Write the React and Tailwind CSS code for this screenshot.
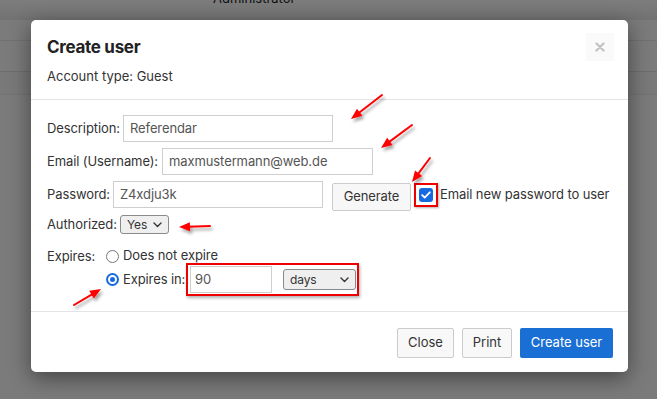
import React from "react";

const Chevron = ({ className = "" }) => (
  <svg className={className} width="9" height="6" viewBox="0 0 9 6" fill="none">
    <path d="M1 1l3.5 3.5L8 1" stroke="#333" strokeWidth="1.4" strokeLinecap="round" strokeLinejoin="round" />
  </svg>
);

const arrows = [
  [382, 95, 351, 119],
  [412, 125, 381, 148],
  [430, 158, 412, 182],
  [210, 226, 179, 227],
  [74, 305, 101, 289],
];

function Arrow({ x1, y1, x2, y2 }) {
  const dx = x2 - x1, dy = y2 - y1;
  const len = Math.hypot(dx, dy);
  const ux = dx / len, uy = dy / len;
  const hl = 11, hw = 4.5;
  const bx = x2 - ux * hl, by = y2 - uy * hl;
  const px = -uy, py = ux;
  const pts = `${x2},${y2} ${bx + px * hw},${by + py * hw} ${bx - px * hw},${by - py * hw}`;
  return (
    <g>
      <line x1={x1} y1={y1} x2={bx + ux * 2} y2={by + uy * 2} stroke="#f00" strokeWidth="2" strokeLinecap="round" />
      <polygon points={pts} fill="#f00" />
    </g>
  );
}

export default function App() {
  return (
    <div
      className="relative w-[657px] h-[399px] overflow-hidden bg-[#7b7b7b]"
      style={{ fontFamily: "Inter, 'Noto Sans', sans-serif" }}
    >
      {/* background page */}
      <div className="absolute left-0 top-0 w-full h-[20px] bg-gradient-to-b from-[#7d7d7d] to-[#727272]" />
      <div className="absolute left-[213px] top-[-11px] text-[13px] text-[#111]">Administrator</div>
      <div className="absolute left-0 top-[40px] w-full h-px bg-[#717171]" />
      <div className="absolute left-0 top-[71px] w-full h-px bg-[#6e6e6e]" />
      <div className="absolute left-0 top-[72px] w-full h-[22px] bg-[#797979]" />
      <div className="absolute left-0 top-[94px] w-full h-px bg-[#737373]" />

      {/* modal */}
      <div className="absolute left-[31px] top-[20px] w-[597px] h-[352px] bg-white rounded-[5px] shadow-[0_6px_22px_rgba(0,0,0,0.45)] flex flex-col text-[#333]">
        {/* header */}
        <div className="relative h-[80px] border-b border-[#e3e3e3] px-[16px] pt-[15px]">
          <div className="text-[17px] leading-[24px] font-bold text-[#222] tracking-[-0.3px]">Create user</div>
          <div className="mt-[7px] text-[13px] leading-[20px]">Account type: Guest</div>
          <div className="absolute right-[14px] top-[13px] w-[28px] h-[28px] bg-[#fafafa] flex items-center justify-center">
            <svg width="10" height="10" viewBox="0 0 10 10">
              <path d="M1.5 1.5l7 7M8.5 1.5l-7 7" stroke="#c4c4c4" strokeWidth="2.4" strokeLinecap="round" />
            </svg>
          </div>
        </div>

        {/* body */}
        <div className="h-[212px] border-b border-[#e3e3e3] pl-[16px] pt-[15px] text-[13px] tracking-[-0.1px]">
          <div className="flex items-center h-[27px]">
            <span className="w-[76px] whitespace-nowrap">Description:</span>
            <div className="w-[210px] h-[27px] border border-[#cfcfcf] flex items-center px-[6px] text-[#555]">Referendar</div>
          </div>
          <div className="flex items-center h-[27px] mt-[6px]">
            <span className="w-[115px] whitespace-nowrap">Email (Username):</span>
            <div className="w-[211px] h-[27px] border border-[#cfcfcf] flex items-center px-[6px] text-[#555]">maxmustermann@web.de</div>
          </div>
          <div className="flex items-start h-[29px] mt-[6px]">
            <span className="w-[66px] whitespace-nowrap leading-[27px]">Password:</span>
            <div className="w-[210px] h-[27px] border border-[#cfcfcf] flex items-center px-[6px] text-[#555]">Z4xdju3k</div>
            <div className="ml-[9px] w-[79px] h-[28px] border border-[#cbcbcb] bg-[#f7f7f7] rounded-[2px] flex items-center justify-center text-[#333] mt-[2px]">Generate</div>
            <div className="ml-[3px] mt-[2px] w-[24px] h-[24px] border-2 border-[#ee0000] flex items-center justify-center shadow-[1px_1px_2px_rgba(0,0,0,0.3)]">
              <div className="w-[14px] h-[14px] rounded-[3px] bg-[#1769e0] flex items-center justify-center">
                <svg width="10" height="8" viewBox="0 0 10 8">
                  <path d="M1.2 4.2l2.5 2.4L8.8 1.3" stroke="#fff" strokeWidth="1.8" fill="none" strokeLinecap="round" strokeLinejoin="round" />
                </svg>
              </div>
            </div>
            <span className="ml-[2px] whitespace-nowrap leading-[27px]">Email new password to user</span>
          </div>

          <div className="flex items-center h-[19px] mt-[5px]">
            <span className="w-[73px] whitespace-nowrap">Authorized:</span>
            <div className="w-[49px] h-[19px] border border-[#8a8a8a] rounded-[3px] bg-[#efefef] flex items-center justify-between pl-[6px] pr-[6px] text-[12px]">
              <span>Yes</span>
              <Chevron />
            </div>
          </div>

          <div className="flex mt-[14px]">
            <span className="w-[59px] h-[16px] leading-[16px]">Expires:</span>
            <div className="flex flex-col">
              <div className="flex items-center h-[16px]">
                <div className="w-[13px] h-[13px] rounded-full border-[1.5px] border-[#777] bg-white" />
                <span className="ml-[4px]">Does not expire</span>
              </div>
              <div className="flex items-center mt-[-1px]">
                <div className="w-[13px] h-[13px] rounded-full bg-[#1769e0] flex items-center justify-center">
                  <div className="w-[9px] h-[9px] rounded-full border-[2px] border-white bg-[#1769e0]" />
                </div>
                <span className="ml-[4px] w-[63px] whitespace-nowrap">Expires in:</span>
                <div className="w-[173px] h-[33px] border-2 border-[#ee0000] shadow-[1px_2px_3px_rgba(0,0,0,0.3)] flex items-center pl-[2px]">
                  <div className="w-[82px] h-[27px] border border-[#cfcfcf] flex items-center px-[4px] text-[#555]">90</div>
                  <div className="ml-[11px] w-[73px] h-[21px] border border-[#8a8a8a] rounded-[3px] bg-[#efefef] flex items-center justify-between pl-[6px] pr-[6px] text-[12px]">
                    <span>days</span>
                    <Chevron />
                  </div>
                </div>
              </div>
            </div>
          </div>
        </div>

        {/* footer */}
        <div className="flex-1 flex items-start justify-end pr-[15px] pt-[16px] gap-[8px] text-[13px]">
          <div className="w-[57px] h-[30px] border border-[#cbcbcb] bg-[#f8f8f8] rounded-[2px] flex items-center justify-center">Close</div>
          <div className="w-[50px] h-[30px] border border-[#cbcbcb] bg-[#f8f8f8] rounded-[2px] flex items-center justify-center">Print</div>
          <div className="w-[93px] h-[30px] bg-[#196fd3] rounded-[2px] flex items-center justify-center text-white">Create user</div>
        </div>
      </div>

      {/* annotation arrows */}
      <svg className="absolute left-0 top-0 pointer-events-none" width="657" height="399">
        <defs>
          <filter id="sh" x="-50%" y="-50%" width="200%" height="200%">
            <feDropShadow dx="2" dy="3" stdDeviation="1.6" floodColor="#000" floodOpacity="0.35" />
          </filter>
        </defs>
        <g filter="url(#sh)">
          {arrows.map(([a, b, c, d], i) => (
            <Arrow key={i} x1={a} y1={b} x2={c} y2={d} />
          ))}
        </g>
      </svg>
    </div>
  );
}
